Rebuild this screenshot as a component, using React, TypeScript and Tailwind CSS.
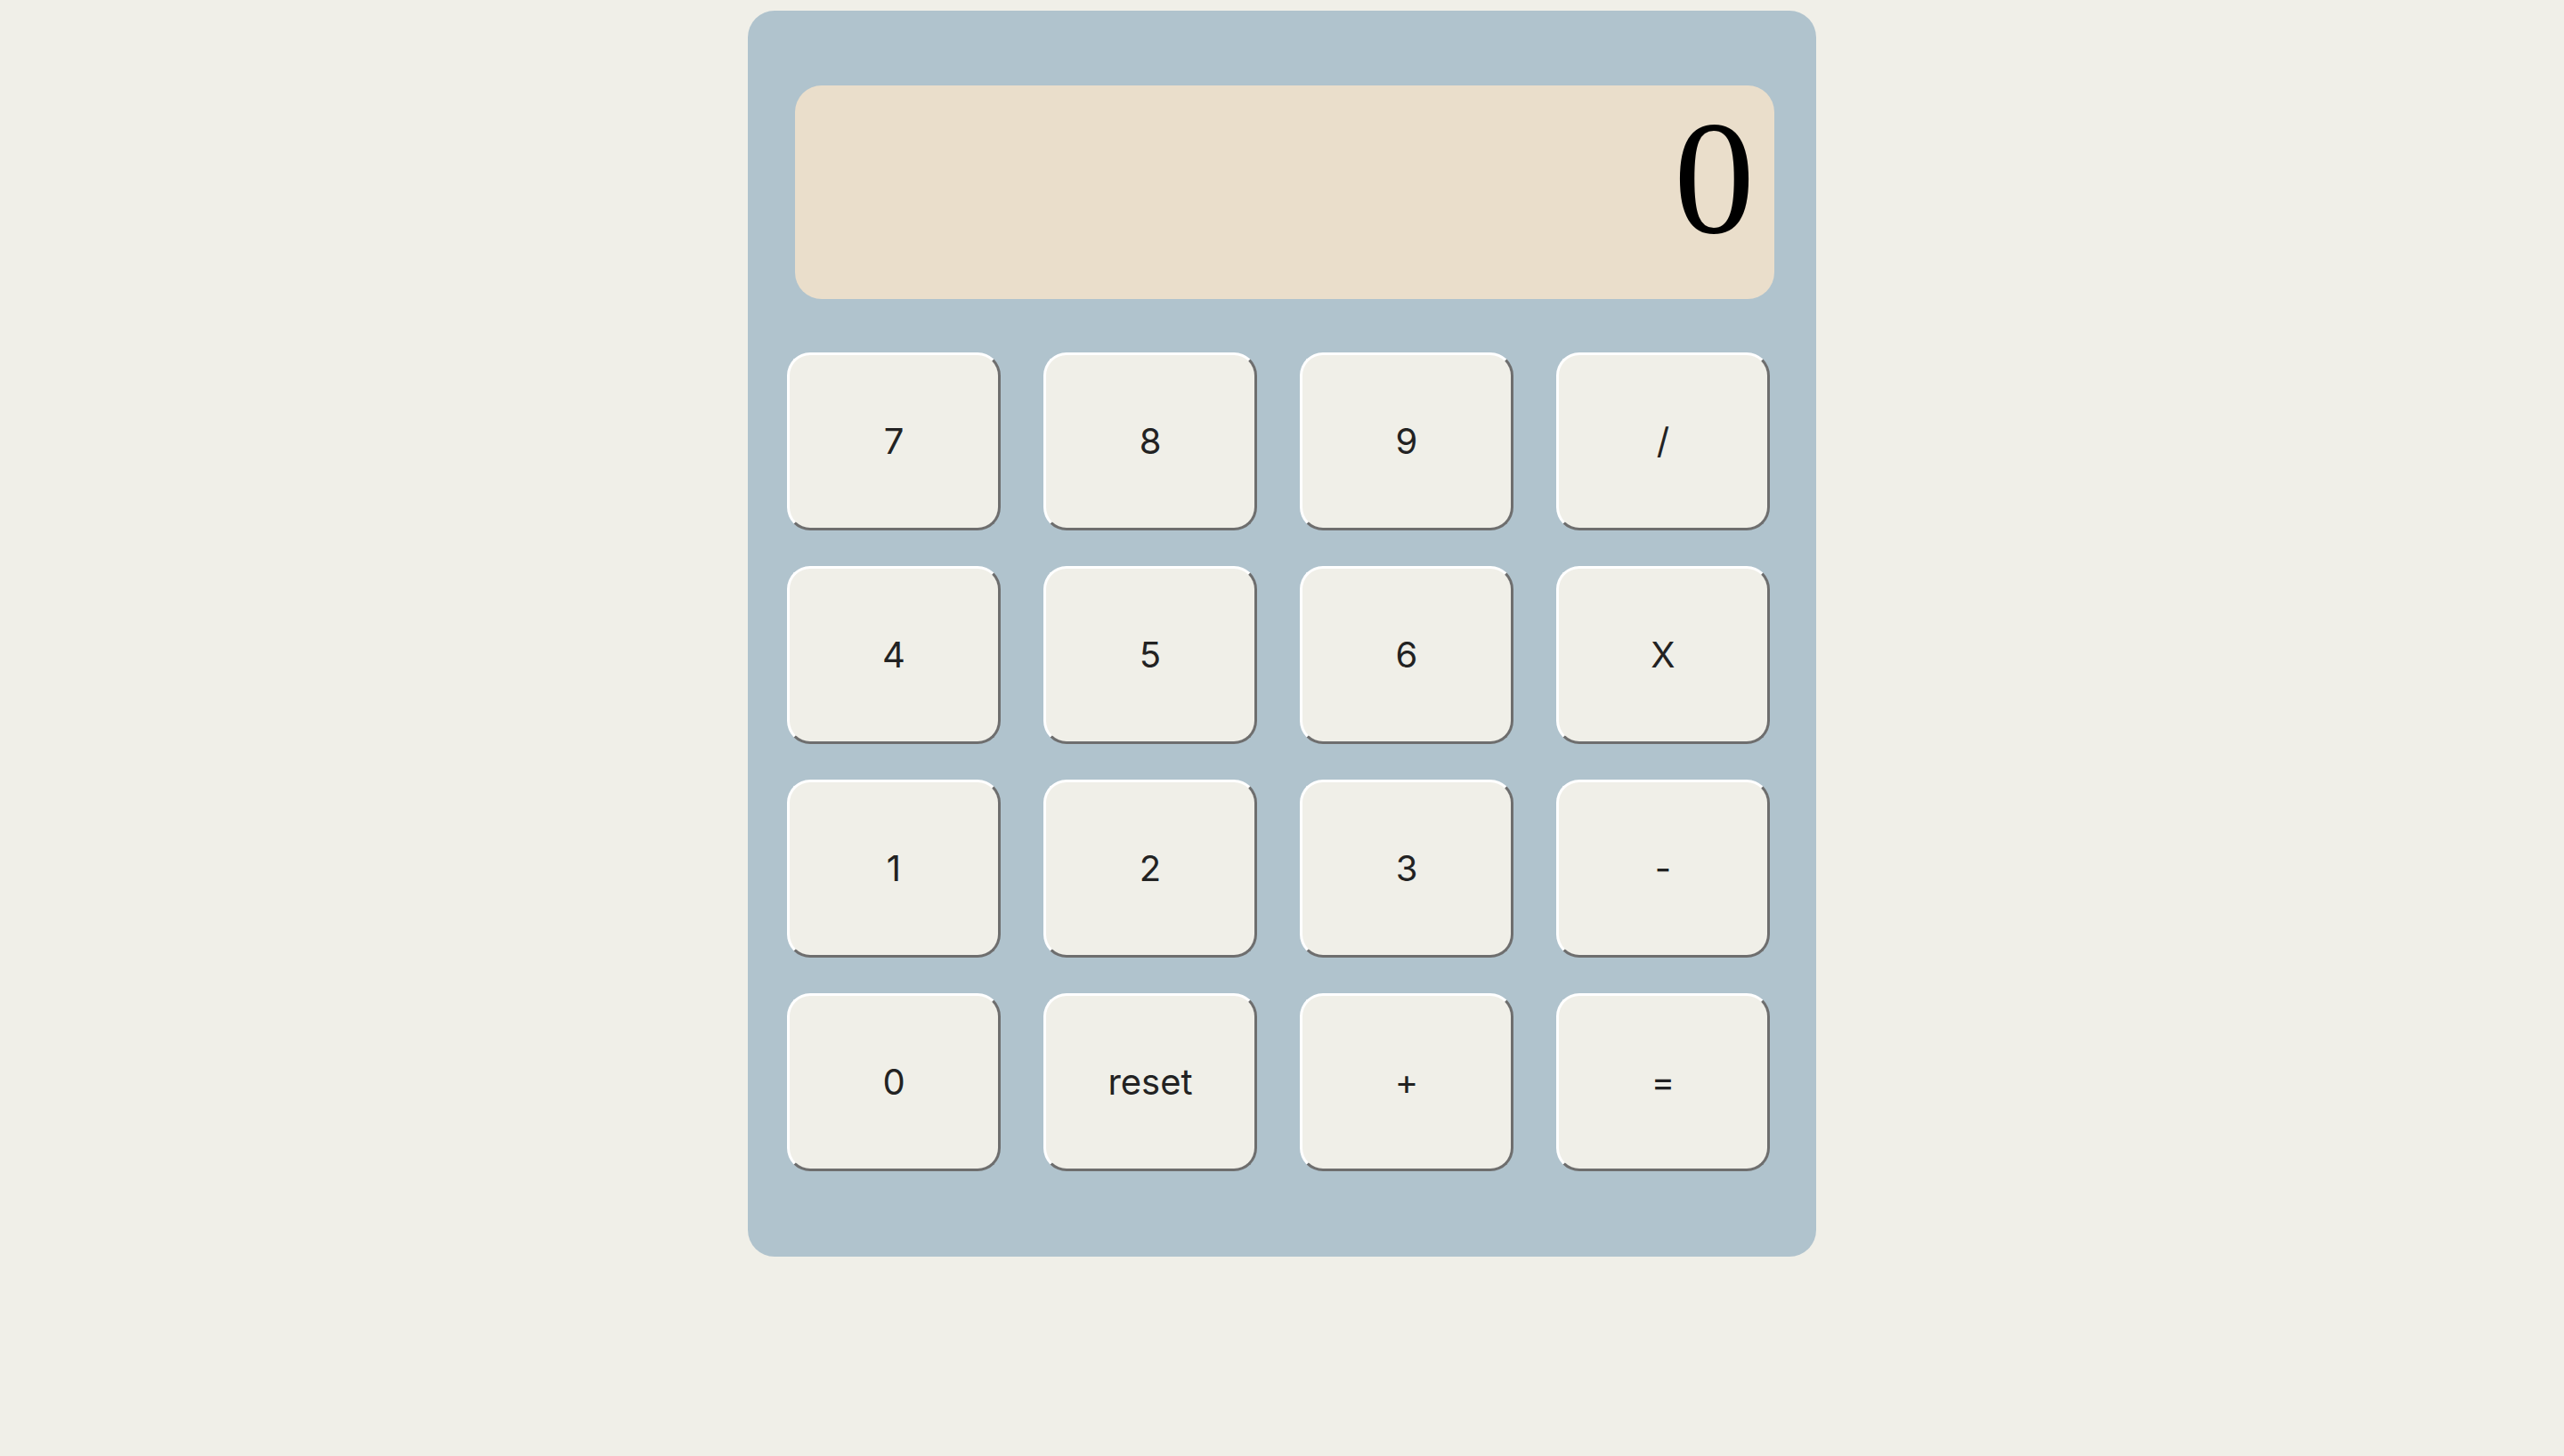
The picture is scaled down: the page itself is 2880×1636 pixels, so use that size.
import { useState } from 'react'

const KEYS = ['7', '8', '9', '/', '4', '5', '6', 'X', '1', '2', '3', '-', '0', 'reset', '+', '=']

export default function App() {
  const [display, setDisplay] = useState('0')

  const press = (k: string) => {
    if (k === 'reset') return setDisplay('0')
    if (k === '=') {
      try {
        const expr = display.replace(/X/g, '*')
        // eslint-disable-next-line no-new-func
        const out = Function(`return (${expr})`)()
        setDisplay(String(out))
      } catch {
        setDisplay('0')
      }
      return
    }
    setDisplay((d) => (d === '0' ? k : d + k))
  }

  return (
    <div className="min-h-screen bg-[#f0efe8] pt-[12px]">
      {/* CALCULATOR BODY */}
      <div className="mx-auto w-[1200px] h-[1400px] rounded-[30px] bg-[#b0c3cd] pt-[84px]">
        {/* SCREEN */}
        <div className="ml-[53px] w-[1100px] h-[240px] rounded-[30px] bg-[#eaDECB] pr-[22px] pt-[13px] text-right font-['Liberation_Serif',serif] text-[182px] leading-none text-black overflow-hidden">
          {display}
        </div>

        {/* KEYPAD */}
        <div className="ml-[44px] mt-[60px] grid grid-cols-[repeat(4,240px)] grid-rows-[repeat(4,200px)] gap-x-[48px] gap-y-[40px]">
          {KEYS.map((k) => (
            <button
              key={k}
              onClick={() => press(k)}
              className="flex items-center justify-center rounded-[26px] border-[3px] border-t-white border-l-white border-r-[#6e6e6e] border-b-[#6e6e6e] bg-[#f0efe8] font-['Inter',sans-serif] text-[40px] text-[#222222] cursor-pointer"
            >
              {k}
            </button>
          ))}
        </div>
      </div>
    </div>
  )
}
